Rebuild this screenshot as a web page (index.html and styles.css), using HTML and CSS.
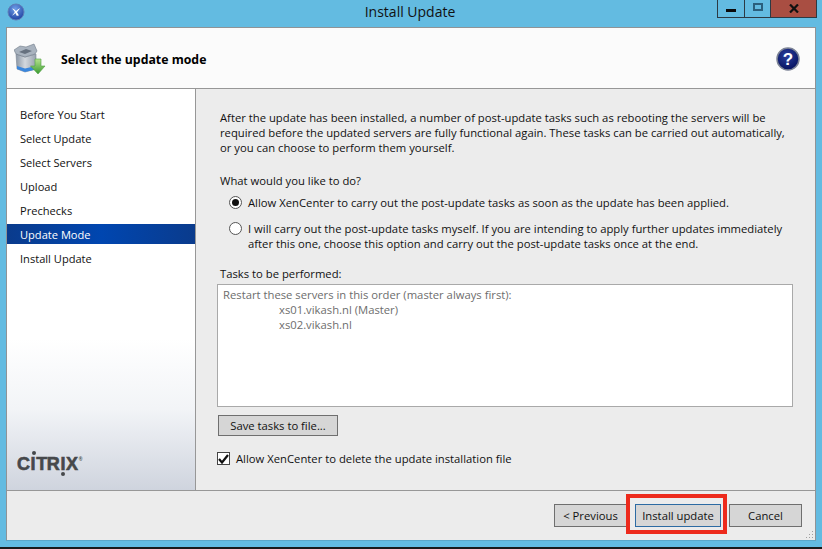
FILE: index.html
```html
<!DOCTYPE html>
<html lang="en">
<head>
<meta charset="utf-8">
<title>Install Update</title>
<link rel="stylesheet" href="styles.css">
</head>
<body>
<div class="desktop">
  <header class="titlebar">
    <svg class="appicon" width="18" height="18" viewBox="0 0 18 18"><defs><radialGradient id="ag" cx="45%" cy="30%" r="75%"><stop offset="0" stop-color="#6f9fe8"/><stop offset="1" stop-color="#1c3d9e"/></radialGradient></defs><circle cx="9" cy="9" r="8" fill="url(#ag)" stroke="#5f7fb8"/><path d="M5 5.500c2 .3 3 1.400 4 2.600 1.200-1.200 2.300-2.200 4.200-2.800-1.200 1.300-2.300 2.500-3.200 3.900.7 1 1.300 2 1.900 3.300l-2.200.2c-.4-1-.9-1.800-1.400-2.600-.9 1-1.700 1.900-3.300 2.700.9-1.400 1.800-2.600 2.800-3.900C7 7.600 6.200 6.500 5 5.500z" fill="#fff"/></svg>
    <div class="title">Install Update</div>
    <div class="controls">
      <div class="ctl ctl-min"><span class="min-glyph"></span></div>
      <div class="ctl ctl-max"><span class="max-glyph"></span></div>
      <div class="ctl ctl-close"><svg width="10" height="9" viewBox="0 0 10 9"><path d="M1 .5l8 8M9 .5l-8 8" stroke="#111" stroke-width="2.200" fill="none"/></svg></div>
    </div>
  </header>
  <div class="window">
    <div class="head">
      <svg class="boxicon" width="32" height="32" viewBox="0 0 32 32"><defs><linearGradient id="bx" x1="0" y1="0" x2="1" y2="0"><stop offset="0" stop-color="#8a96a5"/><stop offset=".45" stop-color="#d3d8de"/><stop offset="1" stop-color="#98a2ae"/></linearGradient><linearGradient id="ar" x1="0" y1="0" x2="0" y2="1"><stop offset="0" stop-color="#b5e38c"/><stop offset="1" stop-color="#3a9a32"/></linearGradient></defs><path d="M2 11l9 3 11-3v15l-11 3-8-3z" fill="url(#bx)" stroke="#7a8593" stroke-width=".6"/><path d="M3 23l8 2.500 11-2.500v3.500l-11 2.500-8-3z" fill="#3a86dc"/><path d="M0 7l6-4 6 1 8-3 3 7-2 3-10 3-9-3z" fill="#a9b3bf" stroke="#6f7a88" stroke-width=".6"/><path d="M5 9l7-3 6 2-7 3z" fill="#66717f"/><path d="M21 16h6v7h4l-7 8-7.500-8H21z" fill="url(#ar)" stroke="#4f9f43" stroke-width=".6"/></svg>
      <h1 class="heading">Select the update mode</h1>
      <svg class="help" width="24" height="24" viewBox="0 0 24 24"><defs><radialGradient id="hg" cx="45%" cy="35%" r="65%"><stop offset="0" stop-color="#2a3f9c"/><stop offset="1" stop-color="#07125f"/></radialGradient></defs><circle cx="12" cy="12" r="11" fill="url(#hg)" stroke="#7d8496" stroke-width="1.500"/><text x="12" y="18" text-anchor="middle" class="help-q">?</text></svg>
    </div>
    <div class="middle">
      <nav class="sidebar">
        <ul class="steps">
          <li class="step">Before You Start</li>
          <li class="step">Select Update</li>
          <li class="step">Select Servers</li>
          <li class="step">Upload</li>
          <li class="step">Prechecks</li>
          <li class="step step-active">Update Mode</li>
          <li class="step">Install Update</li>
        </ul>
        <div class="logo">C<span class="logo-i logo-top">I</span>TR<span class="logo-i logo-bottom">I</span>X<span class="logo-r">®</span></div>
      </nav>
      <main class="main">
        <p class="intro">After the update has been installed, a number of post-update tasks such as rebooting the servers will be<br>required before the updated servers are fully functional again. These tasks can be carried out automatically,<br>or you can choose to perform them yourself.</p>
        <p class="question">What would you like to do?</p>
        <div class="option opt-first"><span class="radio radio-on"></span><span>Allow XenCenter to carry out the post-update tasks as soon as the update has been applied.</span></div>
        <div class="option opt-second"><span class="radio"></span><span>I will carry out the post-update tasks myself. If you are intending to apply further updates immediately<br>after this one, choose this option and carry out the post-update tasks once at the end.</span></div>
        <p class="tasks-label">Tasks to be performed:</p>
        <div class="tasks">Restart these servers in this order (master always first):<div class="server">xs01.vikash.nl (Master)</div><div class="server">xs02.vikash.nl</div></div>
        <button class="btn btn-save">Save tasks to file...</button>
        <label class="check-row"><span class="check"><svg width="11" height="10" viewBox="0 0 11 10"><path d="M1 5l3 3.500L10 1" stroke="#111" stroke-width="2.200" fill="none"/></svg></span>Allow XenCenter to delete the update installation file</label>
      </main>
    </div>
    <footer class="foot">
      <button class="btn btn-prev">&lt; Previous</button>
      <button class="btn btn-install">Install update</button>
      <button class="btn btn-cancel">Cancel</button>
      <div class="annot"></div>
      <svg class="grip" width="9" height="9" viewBox="0 0 9 9"><path d="M7 1h1v1H7zM4 4h1v1H4zM7 4h1v1H7zM1 7h1v1H1zM4 7h1v1H4zM7 7h1v1H7z" fill="#a0a0a0"/></svg>
    </footer>
  </div>
  <div class="taskbar"></div>
</div>
</body>
</html>
```
FILE: styles.css
```css
* { box-sizing: border-box; }
html, body { margin: 0; padding: 0; }
body { width: 822px; height: 549px; overflow: hidden; font-family: "Open Sans", "Noto Sans", sans-serif; font-size: 11.280px; line-height: 15px; color: #111; }
.desktop { width: 822px; height: 549px; background: #63bbe1; display: flex; flex-direction: column; }
.titlebar { height: 27px; flex: none; position: relative; display: flex; align-items: flex-start; padding: 3px 0 0 7px; }
.appicon { flex: none; }
.title { position: absolute; left: 0; right: 0; top: 3px; padding-right: 2px; text-align: center; font-size: 14px; line-height: 18px; color: #111; }
.controls { margin-left: auto; margin-right: 5px; margin-top: -3px; display: flex; height: 18px; border: 1px solid #2c3a44; border-top: 0; }
.ctl { height: 17px; display: flex; align-items: center; justify-content: center; }
.ctl-min { width: 27px; border-right: 1px solid #2c3a44; }
.ctl-max { width: 26px; border-right: 1px solid #2c3a44; }
.ctl-close { width: 45px; background: #a94e42; }
.min-glyph { width: 10px; height: 3px; background: #0b0b0b; margin-top: 3px; }
.max-glyph { width: 10px; height: 8px; border: 2px solid #2a5f7d; margin-top: -3px; }
.window { width: 810px; height: 514px; margin-left: 6px; flex: none; background: #ececec; border: 1px solid #8f9396; border-bottom-color: #5aa7c9; display: flex; flex-direction: column; }
.head { height: 61px; flex: none; background: #fbfbfb; border-bottom: 1px solid #979797; display: flex; align-items: center; padding: 1px 0 0 7px; position: relative; }
.boxicon { flex: none; }
.heading { margin: 3px 0 0 15px; font-size: 12.300px; line-height: 18px; font-weight: 700; color: #000; }
.help { margin-left: auto; margin-right: 15px; flex: none; }
.help-q { font: 700 17px "Liberation Sans", sans-serif; fill: #fff; }
.middle { height: 402px; flex: none; display: flex; border-bottom: 1px solid #979797; }
.sidebar { width: 189px; flex: none; border-right: 1px solid #979797; background: linear-gradient(#fff 0, #fff 250px, #f2f4f7 320px, #cfd4de 100%); padding-top: 15px; position: relative; }
.steps { list-style: none; margin: 0; padding: 0; display: flex; flex-direction: column; gap: 4px; }
.step { height: 20px; line-height: 21px; padding-left: 13px; font-size: 11.100px; color: #111; }
.step-active { background: linear-gradient(90deg, #0a3b8c, #0046b0 50%, #0a3b8c); color: #fff; font-weight: 500; }
.logo { position: absolute; left: 10px; top: 365px; font: 700 18px/20px "Liberation Sans", sans-serif; letter-spacing: -.4px; color: #46484b; -webkit-text-stroke: .6px #46484b; display: flex; align-items: flex-start; }
.logo-i { position: relative; margin: 0 1px; }
.logo-top::after, .logo-bottom::after { content: ""; position: absolute; left: 1px; width: 4px; height: 4px; border-radius: 50%; background: #46484b; }
.logo-top::after { top: -3px; }
.logo-bottom::after { top: 18px; }
.logo-r { font-size: 5px; line-height: 10px; -webkit-text-stroke: 0; margin-left: 1px; }
.main { flex: 1; min-width: 0; padding: 21px 0 0 24px; }
.intro, .question, .tasks-label { margin: 0; }
.question { margin-top: 18px; }
.option { display: flex; gap: 6px; padding-left: 9px; }
.opt-first { margin-top: 7px; }
.opt-second { margin-top: 11px; }
.radio { width: 13px; height: 13px; flex: none; border-radius: 50%; border: 1px solid #555; background: #fff; margin-top: 1px; display: flex; align-items: center; justify-content: center; }
.radio-on::after { content: ""; width: 7px; height: 7px; border-radius: 50%; background: #111; }
.tasks-label { margin-top: 15px; }
.tasks { width: 576px; height: 123px; margin: 3px 0 0 -3px; background: #fff; border: 1px solid #a9a9a9; padding: 2px 5px; color: #6d6d6d; }
.server { padding-left: 56px; }
.btn { font: inherit; color: #111; background: #d6d6d6; border: 1px solid #6f6f6f; border-radius: 0; padding: 0; display: block; }
.btn-save { width: 120px; height: 21px; margin: 8px 0 0 -2px; }
.check-row { display: flex; align-items: center; gap: 6px; margin: 15px 0 0 -3px; }
.check { width: 13px; height: 13px; flex: none; border: 1px solid #444; background: #fff; display: flex; align-items: center; justify-content: center; }
.foot { flex: 1; display: flex; align-items: flex-start; padding: 13px 0 0 547px; gap: 8px; position: relative; }
.btn-prev { width: 73px; height: 23px; }
.btn-install { width: 86px; height: 23px; border-color: #2d6ba3; }
.btn-cancel { width: 73px; height: 23px; }
.annot { position: absolute; left: 619px; top: 3px; width: 101px; height: 40px; border: 4px solid #ed2a1c; }
.grip { position: absolute; right: 1px; bottom: 1px; }
.taskbar { height: 2px; margin-top: auto; background: #1a1a1a; }
```
